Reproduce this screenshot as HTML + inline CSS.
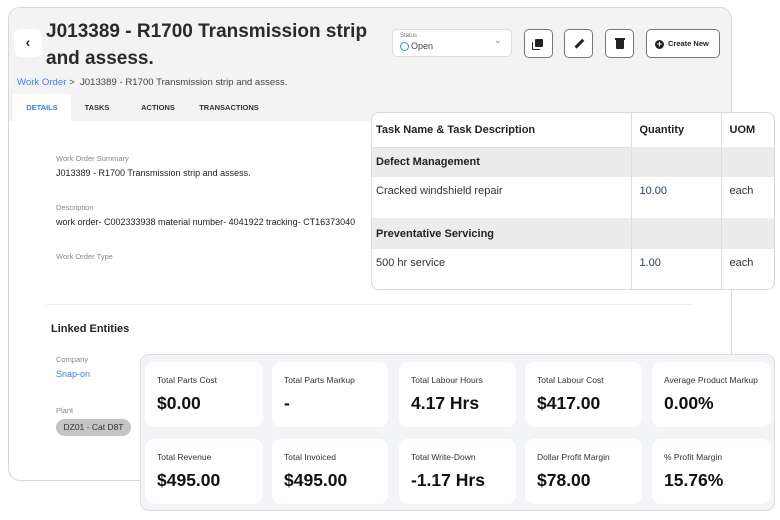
<!DOCTYPE html>
<html><head><meta charset="utf-8"><style>
*{box-sizing:border-box;margin:0;padding:0}
body{width:780px;height:520px;background:#fff;font-family:"Liberation Sans",sans-serif;position:relative;overflow:hidden;color:#222}
.abs{position:absolute}
.panel{left:8px;top:7px;width:724px;height:474px;border:1px solid #d6d6d6;border-radius:12px;background:#fff;overflow:hidden}
.hdr{left:0;top:0;width:724px;height:113px;background:#f3f3f3}
.back{left:5px;top:21px;width:28px;height:28px;background:#fff;border-radius:7px;font-size:14px;text-align:center;line-height:27px;font-weight:bold}
h1{position:absolute;left:37px;top:10px;font-size:19px;line-height:27px;font-weight:bold;color:#2a2a2a;width:345px}
.bc{left:8px;top:69px;font-size:9.6px;color:#444}
.bc span{color:#3b82f6}
.tab{top:86px;height:27px;font-size:7.5px;font-weight:bold;line-height:27px;color:#333;text-align:center}
.lbl{font-size:7.5px;color:#888}
.val{font-size:9px;color:#222}
.btn{top:21px;width:29px;height:29px;border:1px solid #777;border-radius:5px;background:#fff}
table{border-collapse:collapse}
.tbl{left:371px;top:112px;width:404px;height:178px;border:1px solid #d8d8d8;border-radius:8px;background:#fff;overflow:hidden}
.stats{left:140px;top:354px;width:635px;height:157px;border:1px solid #ddd;border-radius:9px;background:#f3f4f8}
.card{position:absolute;width:118px;height:65px;background:#fff;border-radius:9px}
.card .t{position:absolute;left:12px;top:13px;font-size:8.5px;color:#333;white-space:nowrap}
.card .v{position:absolute;left:12px;top:31px;font-size:17.5px;font-weight:bold;color:#111}
</style></head><body>
<div class="abs panel">
 <div class="abs hdr"></div>
 <div class="abs back">&#8249;</div>
 <h1>J013389 - R1700 Transmission strip and assess.</h1>
 <div class="abs bc"><span>Work Order</span> &gt;&nbsp; J013389 - R1700 Transmission strip and assess.</div>
 <div class="abs tab" style="left:4px;width:58px;background:#fff;color:#3b82f6">DETAILS</div>
 <div class="abs tab" style="left:68px;width:40px">TASKS</div>
 <div class="abs tab" style="left:124px;width:50px">ACTIONS</div>
 <div class="abs tab" style="left:186px;width:68px">TRANSACTIONS</div>
 <div class="abs lbl" style="left:47px;top:146px">Work Order Summary</div>
 <div class="abs val" style="left:47px;top:160px">J013389 - R1700 Transmission strip and assess.</div>
 <div class="abs lbl" style="left:47px;top:195px">Description</div>
 <div class="abs val" style="left:47px;top:209px;white-space:nowrap">work order- C002333938 material number- 4041922 tracking- CT16373040</div>
 <div class="abs lbl" style="left:47px;top:244px">Work Order Type</div>
 <div class="abs" style="left:37px;top:296px;width:646px;border-top:1px solid #eee"></div>
 <div class="abs" style="left:42px;top:315px;font-size:11px;font-weight:bold;color:#222">Linked Entities</div>
 <div class="abs lbl" style="left:47px;top:347px">Company</div>
 <div class="abs" style="left:47px;top:361px;font-size:9px;color:#3b82f6">Snap-on</div>
 <div class="abs lbl" style="left:47px;top:398px">Plant</div>
 <div class="abs" style="left:47px;top:411px;width:75px;height:17px;border-radius:9px;background:#c4c4c4;font-size:8.5px;line-height:17px;text-align:center;color:#333">DZ01 - Cat D8T</div>
 <div class="abs" style="left:383px;top:21px;width:120px;height:28px;background:#fff;border:1px solid #ddd;border-radius:5px">
  <div class="abs" style="left:7px;top:3px;font-size:6px;color:#777">Status</div>
  <div class="abs" style="left:7px;top:12px;width:9px;height:9px;border:1px solid #3b82f6;border-radius:50%"></div>
  <div class="abs" style="left:18px;top:11px;font-size:9px;color:#444">Open</div>
  <div class="abs" style="left:101px;top:5px;font-size:9px;color:#777">&#8964;</div>
 </div>
 <div class="abs btn" style="left:515px"><div class="abs" style="left:10px;top:9px;width:8px;height:8px;background:#222;border-radius:1px;box-shadow:-2px 2px 0 #fff,-3px 3px 0 #222"></div></div>
 <div class="abs btn" style="left:555px"><div class="abs" style="left:13px;top:8px;width:2.5px;height:11px;background:#222;transform:rotate(45deg)"></div></div>
 <div class="abs btn" style="left:596px"><div class="abs" style="left:10px;top:9px;width:8px;height:10px;background:#222;border-radius:1px"></div><div class="abs" style="left:9px;top:8px;width:10px;height:1.5px;background:#222"></div></div>
 <div class="abs btn" style="left:637px;width:74px"><div class="abs" style="left:8px;top:10px;width:9px;height:9px;background:#222;border-radius:50%;color:#fff;font-size:9px;line-height:8px;text-align:center;font-weight:bold">+</div><div class="abs" style="left:21px;top:9px;font-size:7.5px;font-weight:bold;color:#222">Create New</div></div>
</div>
<div class="abs tbl">
<table style="width:404px;font-size:11px">
<tr style="height:34px"><th style="text-align:left;padding-left:4px;width:259px;font-weight:bold">Task Name &amp; Task Description</th><th style="text-align:left;padding-left:8px;width:90px;border-left:1px solid #ddd">Quantity</th><th style="text-align:left;padding-left:8px;border-left:1px solid #ddd">UOM</th></tr>
<tr style="height:30px;background:#ececec;font-weight:bold"><td style="padding-left:4px;border-top:1px solid #ddd">Defect Management</td><td style="border-left:1px solid #ddd"></td><td style="border-left:1px solid #ddd"></td></tr>
<tr style="height:41px;vertical-align:top"><td style="padding:8px 4px;color:#333">Cracked windshield repair</td><td style="padding:8px;border-left:1px solid #ddd;color:#2a3a6a">10.00</td><td style="padding:8px;border-left:1px solid #ddd;color:#333">each</td></tr>
<tr style="height:31px;background:#ececec;font-weight:bold"><td style="padding-left:4px">Preventative Servicing</td><td style="border-left:1px solid #ddd"></td><td style="border-left:1px solid #ddd"></td></tr>
<tr style="height:41px;vertical-align:top"><td style="padding:8px 4px;color:#333">500 hr service</td><td style="padding:8px;border-left:1px solid #ddd;color:#2a3a6a">1.00</td><td style="padding:8px;border-left:1px solid #ddd;color:#333">each</td></tr>
</table></div>
<div class="abs stats">
 <div class="card" style="left:4px;top:7px"><div class="t">Total Parts Cost</div><div class="v">$0.00</div></div>
 <div class="card" style="left:131px;top:7px;width:116px"><div class="t">Total Parts Markup</div><div class="v">-</div></div>
 <div class="card" style="left:258px;top:7px;width:117px"><div class="t">Total Labour Hours</div><div class="v">4.17 Hrs</div></div>
 <div class="card" style="left:384px;top:7px;width:117px"><div class="t">Total Labour Cost</div><div class="v">$417.00</div></div>
 <div class="card" style="left:511px;top:7px;width:119px"><div class="t">Average Product Markup</div><div class="v">0.00%</div></div>
 <div class="card" style="left:4px;top:84px"><div class="t">Total Revenue</div><div class="v">$495.00</div></div>
 <div class="card" style="left:131px;top:84px;width:116px"><div class="t">Total Invoiced</div><div class="v">$495.00</div></div>
 <div class="card" style="left:258px;top:84px;width:117px"><div class="t">Total Write-Down</div><div class="v">-1.17 Hrs</div></div>
 <div class="card" style="left:384px;top:84px;width:117px"><div class="t">Dollar Profit Margin</div><div class="v">$78.00</div></div>
 <div class="card" style="left:511px;top:84px;width:119px"><div class="t">% Profit Margin</div><div class="v">15.76%</div></div>
</div>
</body></html>
